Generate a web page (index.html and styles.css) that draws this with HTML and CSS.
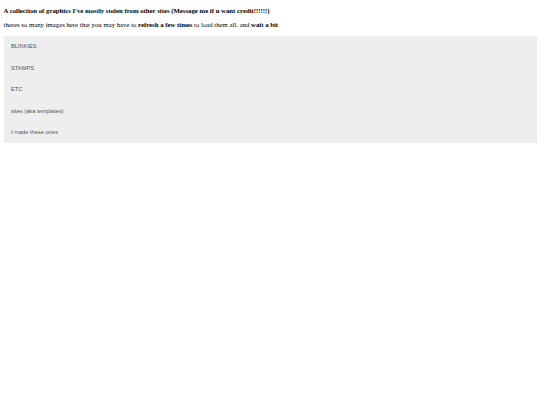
FILE: index.html
```html
<!DOCTYPE html>
<html>
<head>
<meta charset="utf-8">
<link rel="stylesheet" href="styles.css">
</head>
<body>
<div class="page">
  <p class="title">A collection of graphics I've mostly stolen from other sites (Message me if u want credit!!!!!!)</p>
  <p class="note">theres so many images here that you may have to <b>refresh a few times</b> to load them all. and <b>wait a bit</b></p>
  <div class="menu">
    <div class="item">BLINKIES</div>
    <div class="item">STAMPS</div>
    <div class="item">ETC</div>
    <div class="item">sites (aka templates)</div>
    <div class="item">I made these ones</div>
  </div>
</div>
</body>
</html>
```
FILE: styles.css
```css
html, body {
  margin: 0;
  background: #fff;
}
.page {
  display: flex;
  flex-direction: column;
  padding: 7px 3.5px;
  font-family: "Liberation Serif", "Times New Roman", serif;
  color: #000;
}
.title {
  margin: 0;
  font-size: 6.75px;
  line-height: 8px;
  font-weight: bold;
}
.note {
  margin: 5.5px 0 0 0;
  font-size: 6.75px;
  line-height: 8px;
}
.menu {
  margin-top: 7px;
  background: #eeeeee;
  display: flex;
  flex-direction: column;
}
.item {
  height: 21.5px;
  display: flex;
  align-items: center;
  padding-left: 7.5px;
  font-family: "Liberation Sans", Arial, sans-serif;
  font-size: 5.7px;
  color: #555;
}
```
